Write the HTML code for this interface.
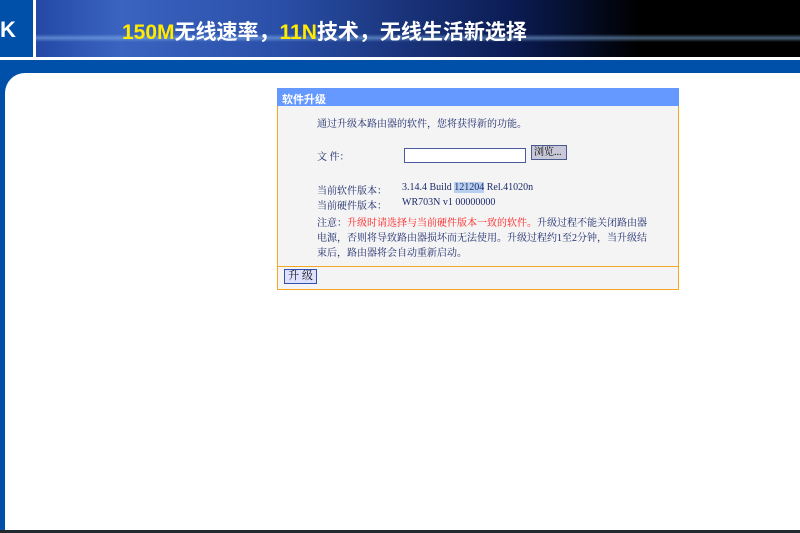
<!DOCTYPE html>
<html><head><meta charset="utf-8"><style>
*{margin:0;padding:0;box-sizing:border-box}
body{width:800px;height:533px;overflow:hidden;background:#fff;position:relative;font-family:"Liberation Serif","Noto Serif CJK SC","Noto Sans CJK SC",serif;}
.ban{position:absolute;left:0;top:0;width:800px;height:57px;background:
linear-gradient(180deg,rgba(0,0,0,0) 0,rgba(0,0,0,0) 34px,rgba(140,190,240,.5) 38px,rgba(0,0,0,0) 42px),
linear-gradient(90deg,#1a3d9a 0,#3a64c0 15%,#2a4fa8 35%,#0a1a50 65%,#000 80%,#000 100%);}
.logo{position:absolute;left:0;top:0;width:33px;height:57px;background:#0050aa;}
.logo span{position:absolute;left:0;top:17px;color:#fff;font:bold 22px "Liberation Sans",sans-serif}
.sep{position:absolute;left:33px;top:0;width:3px;height:57px;background:#fff}
.title{position:absolute;left:122px;top:16px;font:bold 21px "Liberation Sans","Noto Sans CJK SC",sans-serif;color:#fff;letter-spacing:0px}
.title b{color:#ffea00}
.wl{position:absolute;left:0;top:57px;width:800px;height:3px;background:#fff}
.bar{position:absolute;left:0;top:60px;width:800px;height:13px;background:#0050aa}
.lside{position:absolute;left:0;top:73px;width:5px;height:457px;background:#0050aa}
.corner{position:absolute;left:5px;top:73px;width:20px;height:20px;background:#0050aa}
.corner i{position:absolute;left:0;top:0;width:40px;height:40px;border-radius:20px;background:#fff}
.bot{position:absolute;left:0;top:530px;width:800px;height:3px;background:#222a30}
.panel{position:absolute;left:277px;top:88px;width:402px;height:202px;border:1px solid #f5a623;background:#f4f4f4;border-top:none}
.hd{height:18px;background:#6699ff;color:#fff;font:bold 11px "Liberation Sans","Noto Sans CJK SC",sans-serif;padding:3px 5px;margin:0 -1px;}
.t{position:absolute;font-size:10px;color:#1c2a6a;white-space:nowrap}
.inp{position:absolute;left:126px;top:60px;width:122px;height:15px;background:#fff;border:1px solid #4a5aa0}
.br{position:absolute;left:253px;top:57px;width:36px;height:15px;background:#c8c8d8;border:1px solid #4a5a90;font-size:10px;color:#111;padding-left:2px;line-height:13px}
.line{position:absolute;left:0;top:178px;width:400px;height:1px;background:#f5a623}
.btn{position:absolute;left:6px;top:181px;width:33px;height:15px;background:#dde0ff;border:1px solid #3050b0;font-size:11px;line-height:13px;text-align:center;color:#111}
.hl{background:#b8cff0}
.red{color:#ff1a1a}
</style></head><body>
<div class="ban"></div>
<div class="logo"><span>K</span></div>
<div class="sep"></div>
<div class="title"><b>150M</b>无线速率，<b>11N</b>技术，无线生活新选择</div>
<div class="wl"></div><div class="bar"></div>
<div class="lside"></div>
<div class="corner"><i></i></div>
<div class="bot"></div>
<div class="panel">
<div class="hd">软件升级</div>
<div class="t" style="left:39px;top:27px">通过升级本路由器的软件，您将获得新的功能。</div>
<div class="t" style="left:39px;top:60px">文 件：</div>
<div class="inp"></div>
<div class="br">浏览...</div>
<div class="t" style="left:39px;top:94px">当前软件版本：</div>
<div class="t" style="left:124px;top:94px">3.14.4 Build <span class="hl">121204</span> Rel.41020n</div>
<div class="t" style="left:39px;top:109px">当前硬件版本：</div>
<div class="t" style="left:124px;top:109px">WR703N v1 00000000</div>
<div class="t" style="left:39px;top:128px;line-height:15px">注意：<span class="red">升级时请选择与当前硬件版本一致的软件。</span>升级过程不能关闭路由器<br>电源，否则将导致路由器损坏而无法使用。升级过程约1至2分钟，当升级结<br>束后，路由器将会自动重新启动。</div>
<div class="line"></div>
<div class="btn">升 级</div>
</div>
</body></html>
